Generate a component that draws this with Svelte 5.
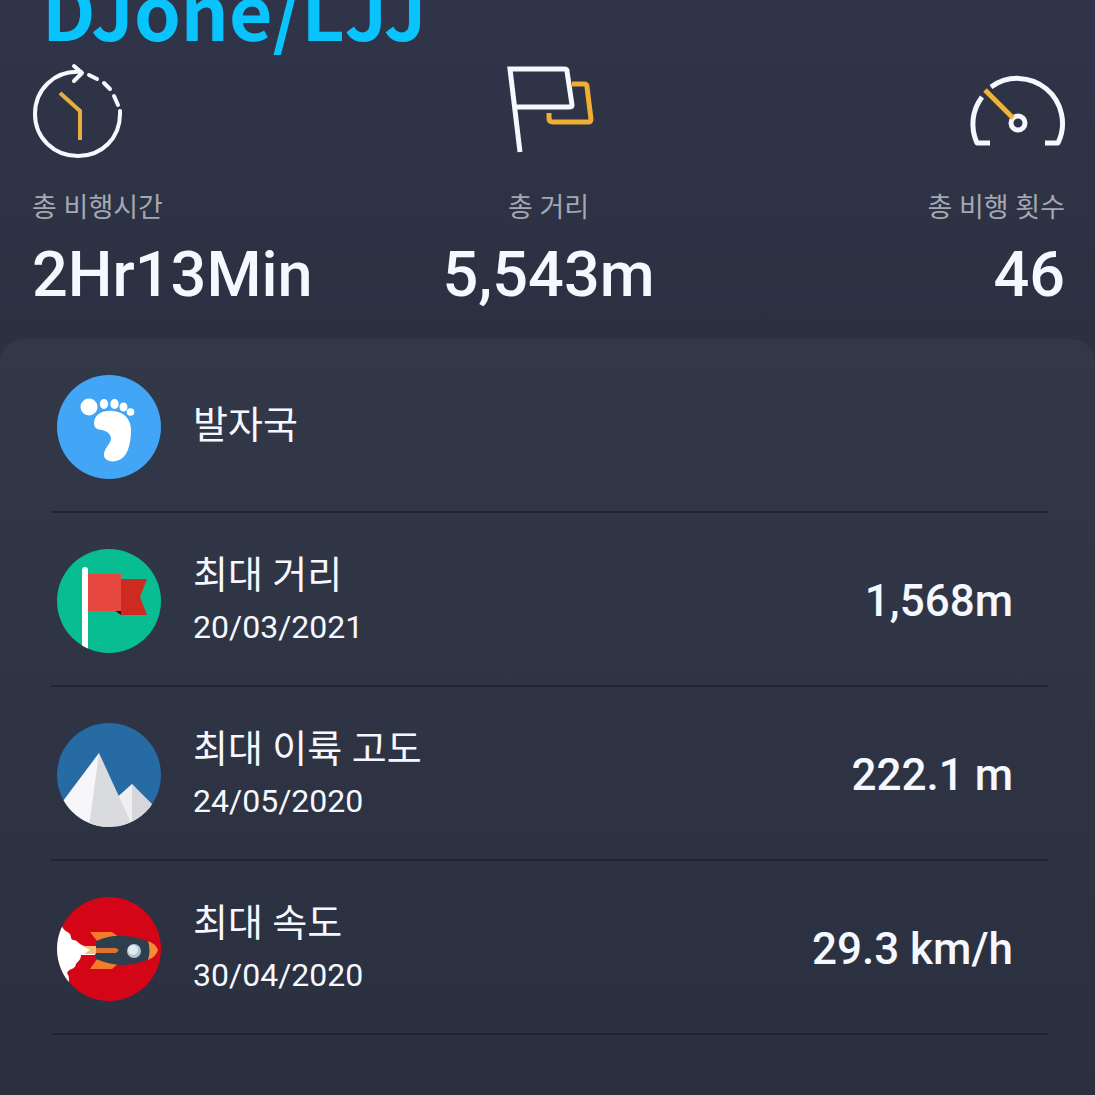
<script lang="ts">
    const records = [
        { icon: "foot", label: "발자국", date: "", value: "" },
        { icon: "flag", label: "최대 거리", date: "20/03/2021", value: "1,568m" },
        { icon: "peak", label: "최대 이륙 고도", date: "24/05/2020", value: "222.1 m" },
        { icon: "rocket", label: "최대 속도", date: "30/04/2020", value: "29.3 km/h" },
    ];
</script>

<svelte:head>
    <title>DJone/LJJ</title>
</svelte:head>

<main>
    <header>
        <h1>DJone/LJJ</h1>
    </header>

    <section class="stats">
        <div class="stat">
            <svg width="96" height="96" viewBox="0 0 96 96" fill="none" aria-hidden="true">
                <g stroke="#f6f8ff" stroke-width="4" stroke-linecap="round" stroke-linejoin="round">
                    <path d="M49 10C22 8 3 28 3 52c0 24 19 42 43 42s42-18 42-42v-3" />
                    <path d="M42 4l8 7-8 8" />
                    <path d="M57 13l8 4M72 21l6 6M82 34l4 9" />
                </g>
                <path d="M28 31l20 18v29" stroke="#e6ae3e" stroke-width="4" />
            </svg>
            <span class="name">총 비행시간</span>
            <strong>2Hr13Min</strong>
        </div>
        <div class="stat center">
            <svg width="96" height="96" viewBox="0 0 96 96" fill="none" aria-hidden="true">
                <path
                    d="M72 22h12q3 0 3 3l4 32q0 3-3 3H53q-4 0-4-4v-5"
                    stroke="#f0ae35"
                    stroke-width="5"
                    stroke-linejoin="round"
                />
                <path
                    d="M20 90L10 7h54q3 0 3 2l5 34q0 2-3 2H14"
                    stroke="#f6f8ff"
                    stroke-width="5"
                />
            </svg>
            <span class="name">총 거리</span>
            <strong>5,543m</strong>
        </div>
        <div class="stat end">
            <svg width="96" height="96" viewBox="0 0 96 96" fill="none" aria-hidden="true">
                <g stroke="#f6f8ff" stroke-width="5" stroke-linejoin="round">
                    <path d="M22 25A45 45 0 0 1 89 81H76" />
                    <path d="M13 35A45 45 0 0 0 8 81h13" />
                    <circle cx="49" cy="61" r="7" />
                </g>
                <path d="M16 28l28 28" stroke="#f0b23c" stroke-width="5" />
            </svg>
            <span class="name">총 비행 횟수</span>
            <strong>46</strong>
        </div>
    </section>

    <section class="card">
        <ul>
            {#each records as record}
                <li>
                    <svg class="badge" viewBox="0 0 104 104" aria-hidden="true">
                        <clipPath id="clip-{record.icon}">
                            <circle cx="52" cy="52" r="52" />
                        </clipPath>
                        <g clip-path="url(#clip-{record.icon})">
                            {#if record.icon === "foot"}
                                <rect width="104" height="104" fill="#42a5f5" />
                                <g fill="#fff">
                                    <circle cx="32" cy="32" r="8.5" />
                                    <ellipse cx="47" cy="29" rx="4.2" ry="5" />
                                    <ellipse cx="57.5" cy="29" rx="4.2" ry="5" />
                                    <ellipse cx="66.5" cy="32" rx="4" ry="4.5" />
                                    <circle cx="73.5" cy="37" r="3.8" />
                                    <path d="M37 49C37 39 46 35 56 36c11 1 18 8 18 19 0 15-4 27-12 30-6 3-15 1-15-5 0-7 6-10 7-16 0-5-4-8-9-9-5 0-8-3-8-6z" />
                                </g>
                            {:else if record.icon === "flag"}
                                <rect width="104" height="104" fill="#07bd91" />
                                <path d="M64 30h26l-7 18 7 18H64z" fill="#cf2a20" />
                                <path d="M57 61h7v5z" fill="#32150f" />
                                <path d="M31 25h33v37H31z" fill="#e64840" />
                                <path d="M25 21q0-3 3-3t3 3v83h-6z" fill="#fff" />
                            {:else if record.icon === "peak"}
                                <rect width="104" height="104" fill="#276ba5" />
                                <path d="M57 77l18-16 24 27v16H60z" fill="#f0f0f1" />
                                <path d="M75 61l27 27v16H75z" fill="#d6d7da" />
                                <path d="M42 30L0 86v18h50z" fill="#f7f7f9" />
                                <path d="M42 30l34 74H32z" fill="#dadbde" />
                            {:else}
                                <rect width="104" height="104" fill="#d30516" />
                                <path d="M0 28h5c0 4 4 6 7 8 3 3 1 6 4 7 5 0 6 5 12 6h10v9H24c0 5-3 6-5 9-1 6-7 4-9 9 3 4 2 8 1 12H0z" fill="#fff" />
                                <path d="M25 49h14v8H27l6-4z" fill="#f6c07a" />
                                <path d="M33 35h22l8 6-17 3h-6zM33 72h22l8-7-17-3h-6z" fill="#f47b2c" />
                                <path d="M39 44q14-6 28-5 14 1 26 6v17q-12 5-26 6-14 0-28-6z" fill="#2d3e4d" />
                                <path d="M39 51h20l3 2-3 3H39z" fill="#dd7130" />
                                <path d="M91 44q8 3 10 9-2 7-10 10 3-9 0-19z" fill="#f28d35" />
                                <circle cx="77" cy="54" r="7" fill="#b4c5d2" />
                                <circle cx="76" cy="53" r="5" fill="#e2e9ef" />
                            {/if}
                        </g>
                    </svg>
                    <div class="info">
                        <span class="label">{record.label}</span>
                        {#if record.date}
                            <time>{record.date}</time>
                        {/if}
                    </div>
                    <span class="value">{record.value}</span>
                </li>
            {/each}
        </ul>
    </section>
</main>

<style>
    :global(body) {
        margin: 0;
        background: #2a303f;
    }
    main {
        min-height: 100vh;
        display: flex;
        flex-direction: column;
        overflow: hidden;
        font-family: Roboto, "Noto Sans CJK KR", sans-serif;
        color: #f6f8ff;
        background: linear-gradient(#303449, #2b3141 340px);
    }
    header {
        height: 54px;
        padding: 0 42px;
        display: flex;
        align-items: flex-end;
    }
    h1 {
        margin: 0;
        font-family: "Noto Sans CJK KR", sans-serif;
        font-size: 75px;
        font-weight: 700;
        line-height: 90px;
        color: #08c3fc;
    }
    .stats {
        display: grid;
        grid-template-columns: 1fr auto 1fr;
        padding: 8px 30px 26px 32px;
    }
    .stat {
        display: flex;
        flex-direction: column;
        align-items: flex-start;
    }
    .stat svg {
        overflow: visible;
    }
    .center {
        align-items: center;
    }
    .end {
        align-items: flex-end;
    }
    .name {
        margin-top: 30px;
        font-size: 27px;
        line-height: 40px;
        color: #a4a8b3;
    }
    strong {
        margin-top: 9px;
        font-size: 63px;
        font-weight: 500;
        line-height: 76px;
    }
    .card {
        flex: 1;
        border-radius: 24px 24px 0 0;
        background: linear-gradient(#323848, #2a303f);
    }
    ul {
        margin: 0 47px 0 51px;
        padding: 0;
        list-style: none;
    }
    li {
        display: flex;
        align-items: center;
        gap: 32px;
        padding: 36px 35px 32px 6px;
        border-bottom: 2px solid #202532;
    }
    .badge {
        flex: none;
        width: 104px;
        height: 104px;
    }
    .info {
        flex: 1;
        display: flex;
        flex-direction: column;
        gap: 4px;
        padding-bottom: 4px;
    }
    .label {
        font-size: 38px;
        font-weight: 400;
        line-height: 52px;
    }
    time {
        font-size: 32px;
        line-height: 44px;
    }
    .value {
        font-size: 44px;
        font-weight: 500;
        line-height: 56px;
    }
</style>
